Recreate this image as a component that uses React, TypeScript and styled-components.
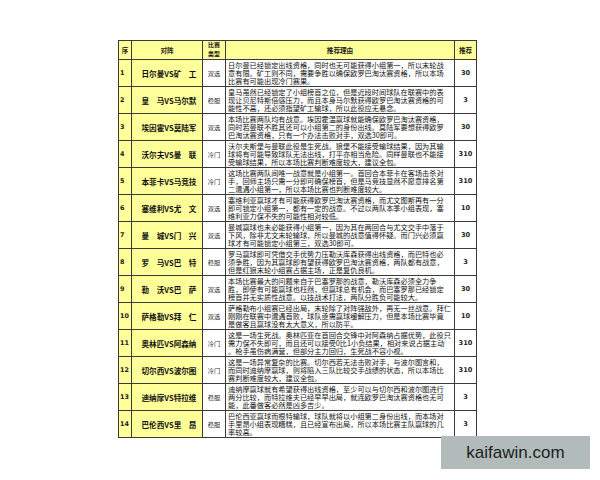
import React from 'react';
import styled, { createGlobalStyle } from 'styled-components';

const Global = createGlobalStyle`
  html, body { margin: 0; padding: 0; background: #ffffff; }
  body {
    width: 600px;
    height: 480px;
    overflow: hidden;
    font-family: "Noto Sans CJK SC", "Liberation Sans", sans-serif;
    color: #111;
  }
`;

const Page = styled.div`
  position: relative;
  width: 600px;
  height: 480px;
  box-sizing: border-box;
  padding: 40px 0 0 118px;
`;

const Table = styled.div`
  display: grid;
  grid-template-columns: 12px 70px 22px 228px 21px;
  grid-template-rows: 18px repeat(14, 26px);
  gap: 1px;
  padding: 1px;
  background: #3a3a3a;
  width: max-content;
`;

const HeadCell = styled.div<{ $small?: boolean }>`
  background: #ffff99;
  display: flex;
  flex-direction: column;
  align-items: center;
  justify-content: center;
  font-weight: 700;
  font-size: ${(p) => (p.$small ? '5.9px' : '6.6px')};
  line-height: ${(p) => (p.$small ? '8.6px' : '10px')};
  color: #1a1a1a;
  white-space: nowrap;
`;

const IndexCell = styled.div`
  background: #ffff99;
  display: flex;
  align-items: center;
  padding-left: 1px;
  font-family: "DejaVu Sans", "Liberation Sans", sans-serif;
  font-weight: 700;
  font-size: 6.4px;
  color: #1a1a1a;
`;

const TeamCell = styled.div`
  background: #ffff99;
  display: flex;
  align-items: center;
  justify-content: center;
  padding-left: 4px;
  font-weight: 700;
  font-size: 7.6px;
  color: #111;
  white-space: nowrap;
`;

const TypeCell = styled.div`
  background: #ffffff;
  display: flex;
  align-items: center;
  justify-content: center;
  font-size: 6.2px;
  color: #2a2a2a;
  white-space: nowrap;
`;

const ReasonCell = styled.div`
  background: #ffffff;
  padding: 0.5px 0 0 2px;
  font-size: 7.2px;
  line-height: 8.4px;
  color: #111;
  overflow: hidden;
`;

const ReasonLine = styled.span`
  display: block;
  white-space: nowrap;
`;

const PickCell = styled.div`
  background: #ffffff;
  display: flex;
  align-items: center;
  justify-content: center;
  font-family: "DejaVu Sans", "Liberation Sans", sans-serif;
  font-weight: 700;
  font-size: 6.6px;
  color: #1a1a1a;
`;

const Watermark = styled.div`
  position: absolute;
  left: 441px;
  top: 436px;
  width: 149px;
  height: 33px;
  background: #b1bbba;
  display: flex;
  align-items: center;
  justify-content: center;
  font-family: "Liberation Sans", Arial, sans-serif;
  font-size: 17px;
  color: #1e1e1e;
`;

type Row = { no: string; match: string; type: string; lines: string[]; pick: string };

const rows: Row[] = [
  {
    no: '1', match: '日尔曼VS矿　工', type: '双选', pick: '30',
    lines: [
      '日尔曼已经锁定出线资格，同时也无可能获得小组第一，所以末轮战',
      '意有限。矿工则不同，需要争胜以确保欧罗巴淘汰赛资格，所以本场',
      '比赛有可能出现冷门赛果。',
    ],
  },
  {
    no: '2', match: '皇　马VS马尔默', type: '稳胆', pick: '3',
    lines: [
      '皇马虽然已经锁定了小组榜首之位，但是近段时间球队在联赛中的表',
      '现让贝尼特斯倍感压力，而且本身马尔默获得欧罗巴淘汰赛资格的可',
      '能性不高，还必须指望矿工输球，所以此役应无悬念。',
    ],
  },
  {
    no: '3', match: '埃因霍VS莫陆军', type: '双选', pick: '30',
    lines: [
      '本场比赛两队均有战意。埃因霍温赢球就能确保欧罗巴淘汰赛资格，',
      '同时若曼联不胜其还可以小组第二的身份出线。莫陆军要想获得欧罗',
      '巴淘汰赛资格，只有一个办法击败对手，双选30即可。',
    ],
  },
  {
    no: '4', match: '沃尔夫VS曼　联', type: '冷门', pick: '310',
    lines: [
      '沃尔夫斯堡与曼联此役是生死战。狼堡不能接受输球结果，因为其输',
      '球将有可能导致球队无法出线，打平亦相当危险。同样曼联也不能接',
      '受输球结果，所以本场比赛判断难度较大，建议全包。',
    ],
  },
  {
    no: '5', match: '本菲卡VS马竞技', type: '冷门', pick: '310',
    lines: [
      '这场比赛两队间唯一战意就是小组第一。首回合本菲卡在客场击杀对',
      '手，回师主场只需一分即可确保榜首，但是马竞技显然不愿意排名第',
      '二遭遇小组第一，所以本场比赛也判断难度较大。',
    ],
  },
  {
    no: '6', match: '塞维利VS尤　文', type: '双选', pick: '10',
    lines: [
      '塞维利亚赢球才有可能获得欧罗巴淘汰赛资格，而尤文图斯再有一分',
      '即可锁定小组第一，都有一定的战意。不过以两队本季小组表现，塞',
      '维利亚力保不失的可能性相对较低。',
    ],
  },
  {
    no: '7', match: '曼　城VS门　兴', type: '双选', pick: '30',
    lines: [
      '曼城赢球也未必能获得小组第一，因为其在两回合与尤文交手中落于',
      '下风，除非尤文末轮输球，所以曼城的战意值得怀疑。而门兴必须赢',
      '球才有可能锁定小组第三，双选30即可。',
    ],
  },
  {
    no: '8', match: '罗　马VS巴　特', type: '稳胆', pick: '3',
    lines: [
      '罗马赢球即可凭借交手优势力压勒沃库森获得出线资格，而巴特也必',
      '须争胜，因为其赢球即有望获得欧罗巴淘汰赛资格，两队都有战意，',
      '但是红狼末轮小组赛占据主场，正是复仇良机。',
    ],
  },
  {
    no: '9', match: '勒　沃VS巴　萨', type: '双选', pick: '30',
    lines: [
      '本场比赛最大的问题来自于巴塞罗那的战意，勒沃库森必须全力争',
      '胜，即使有可能赢球也枉然，但赢球总有机会，而巴塞罗那已经锁定',
      '榜首并无实质性战意。以技战术打法，两队分胜负可能较大。',
    ],
  },
  {
    no: '10', match: '萨格勒VS拜　仁', type: '双选', pick: '10',
    lines: [
      '萨格勒布小组赛已经出局，末轮除了对阵强敌外，再无一丝战意。拜仁',
      '刚刚在联赛中遭遇首败，球队亟需赢球缓解压力，但是本场比赛毕竟',
      '是做客且赢球没有太大意义，所以防平。',
    ],
  },
  {
    no: '11', match: '奥林匹VS阿森纳', type: '冷门', pick: '310',
    lines: [
      '这是一场生死战。奥林匹亚在首回合交锋中对阿森纳占据优势，此役只',
      '需力保不失即可，而且还可以接受0比1小负结果，相对来说占据主动',
      '。枪手虽伤病满营，但部分主力回归，生死战不容小视。',
    ],
  },
  {
    no: '12', match: '切尔西VS波尔图', type: '冷门', pick: '310',
    lines: [
      '这是一场异常复杂的比赛。切尔西若无法击败对手，与波尔图言和，',
      '而同时迪纳摩赢球，则将陷入三队比较交手战绩的状态，所以本场比',
      '赛判断难度较大，建议全包。',
    ],
  },
  {
    no: '13', match: '迪纳摩VS特拉维', type: '稳胆', pick: '3',
    lines: [
      '迪纳摩赢球就有希望获得出线资格，至少可以与切尔西和波尔图进行',
      '两分比较，而特拉维夫已经早早出局，就连欧罗巴淘汰赛资格也无可',
      '能，此番做客必然是凶多吉少。',
    ],
  },
  {
    no: '14', match: '巴伦西VS里　昂', type: '稳胆', pick: '3',
    lines: [
      '巴伦西亚赢球而根特输球，球队就将以小组第二身份出线，而本场对',
      '手里昂小组表现糟糕，且已经宣布出局，所以本场比赛主队赢球的几',
      '率较高。',
    ],
  },
];

export default function App() {
  return (
    <Page>
      <Global />
      <Table>
        <HeadCell>序</HeadCell>
        <HeadCell>对阵</HeadCell>
        <HeadCell $small>
          <span>比赛</span>
          <span>类型</span>
        </HeadCell>
        <HeadCell>推荐理由</HeadCell>
        <HeadCell>推荐</HeadCell>
        {rows.map((r) => (
          <React.Fragment key={r.no}>
            <IndexCell>{r.no}</IndexCell>
            <TeamCell>{r.match}</TeamCell>
            <TypeCell>{r.type}</TypeCell>
            <ReasonCell>
              {r.lines.map((l, i) => (
                <ReasonLine key={i}>{l}</ReasonLine>
              ))}
            </ReasonCell>
            <PickCell>{r.pick}</PickCell>
          </React.Fragment>
        ))}
      </Table>
      <Watermark>kaifawin.com</Watermark>
    </Page>
  );
}
